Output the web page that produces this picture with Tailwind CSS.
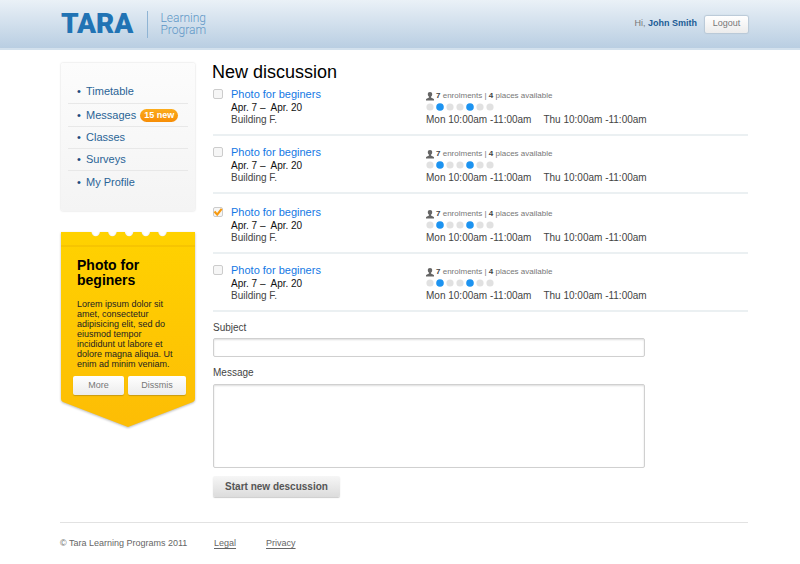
<!DOCTYPE html>
<html lang="en">
<head>
<meta charset="utf-8">
<meta name="viewport" content="width=device-width, initial-scale=1">
<title>TARA Learning Program</title>
<script src="https://cdn.jsdelivr.net/npm/@tailwindcss/browser@4"></script>
</head>
<body class="bg-white font-['Liberation_Sans',Arial,sans-serif] text-[10px] text-[#444]">

<svg class="hidden" aria-hidden="true">
  <symbol id="person" viewBox="0 0 8 9">
    <path d="M4 0C2.500 0 1.800 .9 1.800 2.300c0 1 .5 1.900 1.200 2.400v.7C2.800 6 .3 6 0 7.300V8.500H8V7.300C7.700 6 5.200 6 5 5.400v-.7C5.700 4.200 6.200 3.300 6.200 2.300 6.200 .9 5.500 0 4 0z" fill="#666"/>
  </symbol>
  <symbol id="week" viewBox="0 0 68 8">
    <g fill="#e1e1e1"><circle cx="4" cy="4" r="3.600"/><circle cx="24" cy="4" r="3.600"/><circle cx="34" cy="4" r="3.600"/><circle cx="54" cy="4" r="3.600"/><circle cx="64" cy="4" r="3.600"/></g>
    <g fill="#1c93f0"><circle cx="14" cy="4" r="3.800"/><circle cx="44" cy="4" r="3.800"/></g>
  </symbol>
  <symbol id="tick" viewBox="0 0 10 10">
    <path d="M1.500 4.500 4.200 7.600 8.700 1.800" fill="none" stroke="#f79a10" stroke-width="2.200"/>
  </symbol>
</svg>

<header class="flex h-[50px] items-center justify-between border-b-2 border-[#d3e1ed] bg-linear-to-b from-[#eaf1f7] to-[#b9cee2] pr-[52px] pl-[61px]">
  <a href="#" class="flex items-center">
    <span class="font-['Roboto',sans-serif] text-[28px] leading-8 font-black text-[#2173b4]">TARA</span>
    <span class="ml-[14px] h-[27px] w-px bg-[#8fb4d4]"></span>
    <span class="ml-3 font-['Roboto',sans-serif] text-[12px] leading-3 font-light text-[#5d96c6]"><span class="block">Learning</span><span class="block">Program</span></span>
  </a>
  <div class="flex items-center gap-2 text-[9px] text-[#777]">
    <p>Hi, <a href="#" class="font-bold text-[#1b5c95]">John Smith</a></p>
    <button class="h-[17px] w-[43px] rounded-[2px] bg-linear-to-b from-white to-[#ececec] shadow-[0_0_1px_1px_#b9c8d6]">Logout</button>
  </div>
</header>

<div class="flex pr-[52px] pl-[61px]">
  <aside class="mr-[17px] w-[134px] shrink-0 pt-[13px]">
    <nav class="rounded-[2px] bg-linear-to-b from-[#fcfcfc] to-[#f4f4f4] px-[7px] pt-[17px] pb-[18px] shadow-[0_0_2px_#ccc]">
      <ul class="divide-y divide-[#e8e8e8] text-[11px] text-[#2a6496]">
        <li class="flex h-6 items-center"><span class="w-[18px] pl-[9px] text-[#1d4a80]">•</span><a href="#">Timetable</a></li>
        <li class="flex h-[23px] items-center"><span class="w-[18px] pl-[9px] text-[#1d4a80]">•</span><a href="#">Messages</a><span class="ml-1 rounded-full bg-linear-to-b from-[#fbac1c] to-[#f78d05] px-1 text-[9px] leading-[13px] font-bold text-white">15 new</span></li>
        <li class="flex h-[22px] items-center"><span class="w-[18px] pl-[9px] text-[#1d4a80]">•</span><a href="#">Classes</a></li>
        <li class="flex h-[22px] items-center"><span class="w-[18px] pl-[9px] text-[#1d4a80]">•</span><a href="#">Surveys</a></li>
        <li class="flex h-[22px] items-center"><span class="w-[18px] pl-[9px] text-[#1d4a80]">•</span><a href="#">My Profile</a></li>
      </ul>
    </nav>

    <section class="relative mt-[21px] px-3 pt-[26px] pb-[32px] text-[#222]">
      <svg class="absolute inset-0 h-full w-full overflow-visible drop-shadow-[0_1px_1px_#bbb]" viewBox="0 0 134 195" preserveAspectRatio="none" aria-hidden="true">
        <defs><linearGradient id="gold" x1="0" y1="0" x2="0" y2="1"><stop offset="0" stop-color="#ffd200"/><stop offset="1" stop-color="#fdbd05"/></linearGradient></defs>
        <path d="M0 0H30.500a4.200 4.200 0 0 0 8.400 0H47.200a4.200 4.200 0 0 0 8.400 0H63.900a4.200 4.200 0 0 0 8.400 0H80.600a4.200 4.200 0 0 0 8.400 0H97.300a4.200 4.200 0 0 0 8.400 0H134V167q0 2-2 3L67 195 2 170q-2-1-2-3Z" fill="url(#gold)"/>
        <path d="M0 14H134" stroke="#eeb902" stroke-width="1"/>
      </svg>
      <div class="relative">
        <h2 class="px-1 text-[14px] leading-[15px] font-bold text-black">Photo for beginers</h2>
        <p class="mt-[11px] pr-2 pl-1 text-[9px] leading-[10px]">Lorem ipsum dolor sit amet, consectetur adipisicing elit, sed do eiusmod tempor incididunt ut labore et dolore magna aliqua. Ut enim ad minim veniam.</p>
        <div class="mt-[7px] flex gap-1 text-[9px] text-[#777]">
          <button class="h-[19px] w-[51px] shrink-0 rounded-[2px] bg-linear-to-b from-white to-[#ececec] shadow-[0_1px_1px_#c99b10]">More</button>
          <button class="h-[19px] w-[58px] shrink-0 rounded-[2px] bg-linear-to-b from-white to-[#ececec] shadow-[0_1px_1px_#c99b10]">Dissmis</button>
        </div>
      </div>
    </section>
  </aside>

  <main class="min-w-0 grow pt-3">
    <h1 class="text-[18px] leading-5 text-black">New discussion</h1>
    <ul class="ml-px leading-3">
      <li class="flex border-b-2 border-[#ebf0f2] pt-[5px] pb-2">
        <span class="relative mt-[2px] mr-2 size-[10px] shrink-0"><input id="c1" type="checkbox" class="peer block size-[10px] appearance-none rounded-[2px] border border-[#ccc] bg-[#f6f6f6]"><svg class="pointer-events-none absolute inset-0 hidden size-[10px] peer-checked:block"><use href="#tick"/></svg></span>
        <div class="w-[195px] shrink-0"><label for="c1" class="block text-[11px] leading-[15px] text-[#1478e4]">Photo for beginers</label><p class="text-[#111]">Apr. 7 –&nbsp; Apr. 20</p><p>Building F.</p></div>
        <div class="pt-[3px]"><p class="flex items-center text-[8px] text-[#777]"><svg class="mr-[2px] h-[9px] w-2"><use href="#person"/></svg><span><b class="text-[#444]">7</b> enrolments | <b class="text-[#444]">4</b> places available</span></p><svg class="mt-px mb-[3px] h-2 w-[68px]"><use href="#week"/></svg><p class="flex gap-3"><span>Mon 10:00am -11:00am</span><span>Thu 10:00am -11:00am</span></p></div>
      </li>
      <li class="flex border-b-2 border-[#ebf0f2] pt-[9px] pb-2">
        <span class="relative mt-[2px] mr-2 size-[10px] shrink-0"><input id="c2" type="checkbox" class="peer block size-[10px] appearance-none rounded-[2px] border border-[#ccc] bg-[#f6f6f6]"><svg class="pointer-events-none absolute inset-0 hidden size-[10px] peer-checked:block"><use href="#tick"/></svg></span>
        <div class="w-[195px] shrink-0"><label for="c2" class="block text-[11px] leading-[15px] text-[#1478e4]">Photo for beginers</label><p class="text-[#111]">Apr. 7 –&nbsp; Apr. 20</p><p>Building F.</p></div>
        <div class="pt-[3px]"><p class="flex items-center text-[8px] text-[#777]"><svg class="mr-[2px] h-[9px] w-2"><use href="#person"/></svg><span><b class="text-[#444]">7</b> enrolments | <b class="text-[#444]">4</b> places available</span></p><svg class="mt-px mb-[3px] h-2 w-[68px]"><use href="#week"/></svg><p class="flex gap-3"><span>Mon 10:00am -11:00am</span><span>Thu 10:00am -11:00am</span></p></div>
      </li>
      <li class="flex border-b-2 border-[#ebf0f2] pt-[11px] pb-2">
        <span class="relative mt-[2px] mr-2 size-[10px] shrink-0"><input id="c3" type="checkbox" checked class="peer block size-[10px] appearance-none rounded-[2px] border border-[#ccc] bg-[#f6f6f6]"><svg class="pointer-events-none absolute inset-0 hidden size-[10px] peer-checked:block"><use href="#tick"/></svg></span>
        <div class="w-[195px] shrink-0"><label for="c3" class="block text-[11px] leading-[15px] text-[#1478e4]">Photo for beginers</label><p class="text-[#111]">Apr. 7 –&nbsp; Apr. 20</p><p>Building F.</p></div>
        <div class="pt-[3px]"><p class="flex items-center text-[8px] text-[#777]"><svg class="mr-[2px] h-[9px] w-2"><use href="#person"/></svg><span><b class="text-[#444]">7</b> enrolments | <b class="text-[#444]">4</b> places available</span></p><svg class="mt-px mb-[3px] h-2 w-[68px]"><use href="#week"/></svg><p class="flex gap-3"><span>Mon 10:00am -11:00am</span><span>Thu 10:00am -11:00am</span></p></div>
      </li>
      <li class="flex border-b-2 border-[#ebf0f2] pt-[9px] pb-2">
        <span class="relative mt-[2px] mr-2 size-[10px] shrink-0"><input id="c4" type="checkbox" class="peer block size-[10px] appearance-none rounded-[2px] border border-[#ccc] bg-[#f6f6f6]"><svg class="pointer-events-none absolute inset-0 hidden size-[10px] peer-checked:block"><use href="#tick"/></svg></span>
        <div class="w-[195px] shrink-0"><label for="c4" class="block text-[11px] leading-[15px] text-[#1478e4]">Photo for beginers</label><p class="text-[#111]">Apr. 7 –&nbsp; Apr. 20</p><p>Building F.</p></div>
        <div class="pt-[3px]"><p class="flex items-center text-[8px] text-[#777]"><svg class="mr-[2px] h-[9px] w-2"><use href="#person"/></svg><span><b class="text-[#444]">7</b> enrolments | <b class="text-[#444]">4</b> places available</span></p><svg class="mt-px mb-[3px] h-2 w-[68px]"><use href="#week"/></svg><p class="flex gap-3"><span>Mon 10:00am -11:00am</span><span>Thu 10:00am -11:00am</span></p></div>
      </li>
    </ul>
    <form class="mt-[10px] ml-px max-w-[432px] leading-3">
      <label for="subject" class="block">Subject</label>
      <input id="subject" type="text" class="mt-1 block h-[19px] w-full rounded-[2px] border border-[#d0d0d0] px-1 shadow-[inset_0_1px_2px_#ddd]">
      <label for="message" class="mt-[10px] block">Message</label>
      <textarea id="message" class="mt-[5px] block h-[84px] w-full resize-none rounded-[2px] border border-[#d0d0d0] px-1 shadow-[inset_0_1px_2px_#ddd]"></textarea>
      <button type="button" class="mt-2 h-[21px] w-[127px] rounded-[2px] bg-linear-to-b from-[#f6f6f6] to-[#dcdcdc] font-bold text-[#555] shadow-[0_1px_1px_#ccc]">Start new descussion</button>
    </form>
  </main>
</div>

<footer class="mt-[25px] mr-[52px] ml-[60px] flex items-start border-t border-[#e2e2e2] pt-[14px] text-[9px] leading-3 text-[#666]">
  <p class="w-[154px]">© Tara Learning Programs 2011</p>
  <a href="#" class="mr-[30px] underline underline-offset-2">Legal</a>
  <a href="#" class="underline underline-offset-2">Privacy</a>
</footer>
</body>
</html>
